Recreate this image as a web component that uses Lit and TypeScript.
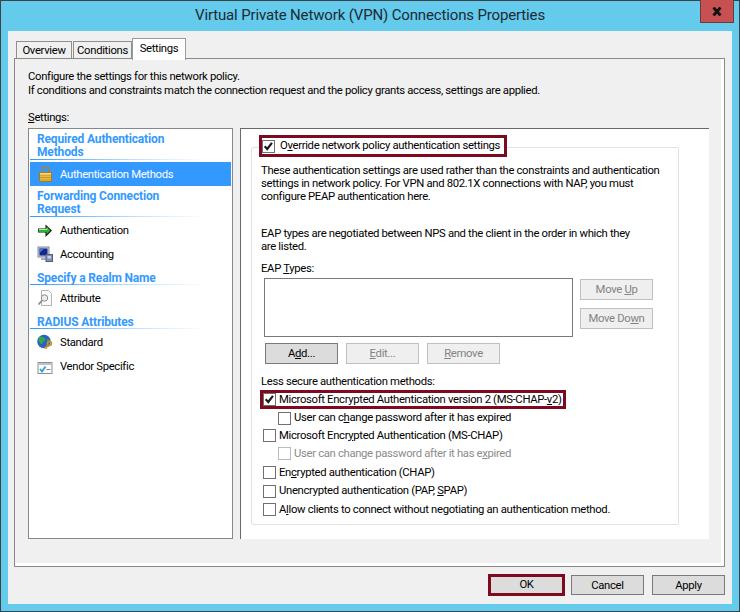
import { LitElement, html, css, svg } from "lit";
import { customElement } from "lit/decorators.js";

const check = svg`<path d="M2 6.2 L5 9.4 L10.6 2.2" fill="none" stroke="#1c1c1c" stroke-width="2.6"/>`;

const icons: Record<string, unknown> = {
  lock: svg`<path d="M5 7V3.600C5 1.800 6.500 .8 8.500 .8s3.500 1 3.500 2.800V7" fill="none" stroke="#8f8660" stroke-width="2"/><rect x="2.500" y="6.500" width="12" height="9" fill="#e8bb45" stroke="#a07d20"/><path d="M3 9h11M3 11.500h11M3 14h11" stroke="#c3962a"/><rect x="3" y="7" width="11" height="1.500" fill="#f7dd8a"/>`,
  arrow: svg`<path d="M1 6.500h7.500V2.500l6.500 6-6.500 6.500v-4.500H1z" fill="#111"/><path d="M1.500 7h8V4.500l4 4-4 4V10h-8z" fill="#26b526"/><path d="M2 7.500h8V6" fill="none" stroke="#a8efa8"/>`,
  monitor: svg`<rect x="1" y="1" width="11" height="10" fill="#c9c9d2" stroke="#8a8a96"/><rect x="2.500" y="2.500" width="8" height="7" fill="#14258c"/><path d="M2.500 2.500h5l-5 4.500z" fill="#3b78e0"/><rect x="4" y="12" width="6" height="2" fill="#a9acb8"/><rect x="9" y="8.500" width="6.500" height="7" fill="#7b92b8" stroke="#555f78"/><rect x="10.500" y="10" width="3.500" height="2.500" fill="#c4d4ec"/>`,
  attr: svg`<path d="M4.500 .5h7l3 3v12h-10z" fill="#fafafa" stroke="#b4b4b4"/><circle cx="7.500" cy="8" r="3.200" fill="#e6eef5" stroke="#8c8c8c"/><path d="M5 10.500L1.500 14.500" stroke="#8c8c8c" stroke-width="1.800"/>`,
  globe: svg`<circle cx="7" cy="7.500" r="6.800" fill="#2a62c8"/><path d="M3 2.500c2 0 3 1 4.500 1.500s1 2.500-.5 3-1 3-2.500 3-2.500-2.500-3-4c0-1.500.5-2.500 1.500-3.500zM10 5l3 1-.5 3-2.500 1z" fill="#37a84a"/><circle cx="12.500" cy="9.500" r="2" fill="none" stroke="#d58f1f" stroke-width="1.500"/><path d="M11 11l-3.500 3.500M8.500 13.500l1.500 1" stroke="#d58f1f" stroke-width="1.500" fill="none"/>`,
  vendor: svg`<rect x="1" y="4.500" width="14" height="11" fill="#fdfdfd" stroke="#8f8f8f"/><rect x="1.500" y="5" width="13" height="2" fill="#b9c2cf"/><path d="M3 11l2 2.500 3.500-5" fill="none" stroke="#2f9fd8" stroke-width="1.800"/><path d="M9.500 11.500h4" stroke="#8a8a8a"/>`,
};

@customElement("app-root")
export class AppRoot extends LitElement {
  static styles = css`
    :host { display: block; width: 740px; height: 612px; font: 11.3px/14px Roboto, "Liberation Sans", sans-serif; letter-spacing: -0.33px; color: #000; }
    * { box-sizing: border-box; }
    u { text-decoration-thickness: 1px; text-underline-offset: 1px; }
    .win { width: 740px; height: 612px; background: #65cbec; border: 1px solid #3c4248; display: flex; flex-direction: column; position: relative; }
    .titlebar { height: 30px; flex: none; text-align: center; font-size: 15px; line-height: 29px; letter-spacing: -0.15px; color: #1c2a33; }
    .close { position: absolute; right: 5px; top: -1px; width: 34px; height: 23px; background: #c75050; border: 1px solid #6e3a3a; border-top: none; display: flex; align-items: center; justify-content: center; }
    .client { flex: none; margin: 0 7px; width: 724px; height: 573px; background: #f0f0f0; padding-top: 7px; }
    .tabs { height: 20px; margin-left: 8px; display: flex; align-items: flex-end; position: relative; z-index: 1; }
    .tab { height: 17px; border: 1px solid #8f8f8f; border-bottom: none; background: #f0f0f0; line-height: 17px; text-align: center; }
    .tab.a { width: 56px; margin-right: 1px; }
    .tab.b { width: 59px; }
    .tab.on { width: 54px; height: 22px; margin-bottom: -2px; background: #fff; line-height: 19px; border-color: #9a9a9a; position: relative; }
    .panel { margin-left: 6px; width: 711px; height: 509px; border: 1px solid #898989; box-shadow: inset -3px -3px 0 #fff; padding: 11px 0 0 13px; }
    .intro { height: 28px; white-space: nowrap; }
    .label { margin-top: 13px; height: 14px; }
    .cols { margin-top: 3px; display: flex; gap: 7px; }
    .side { width: 205px; height: 411px; background: #fff; border: 1px solid #828790; padding-top: 0; }
    .hd { padding: 4px 0 0 8px; font-weight: 700; font-size: 12px; line-height: 13px; letter-spacing: -0.15px; color: #3399ff; }
    .hd.late { padding-top: 6px; margin-bottom: -1px; }
    .rule { height: 1px; margin: 0 26px 1px 1px; background: linear-gradient(90deg, #3399ff, #bfe0ff 60%, #fff); }
    .rule.first { margin-bottom: 2px; }
    .row { height: 24px; margin-left: 1px; margin-right: 1px; padding-left: 7px; display: flex; align-items: center; gap: 7px; }
    .row svg { flex: none; width: 16px; height: 16px; }
    .row span { padding-top: 2px; }
    .row.sel { background: #3399ff; color: #fff; }
    .pane { width: 469px; height: 411px; background: #fff; border-left: 1px solid #696969; border-top: 1px solid #696969; padding: 18px 0 0 10px; }
    .group { width: 428px; height: 378px; border: 1px solid #dfe3e6; border-radius: 2px; }
    .mark { border: 3px solid #7d0a1e; background: #fff; display: flex; align-items: center; gap: 5px; white-space: nowrap; }
    .mark.top { margin: -13px 0 0 7px; width: 248px; height: 22px; }
    .mark.ms { margin: 1px 0 0 8px; width: 306px; height: 19px; gap: 3px; }
    .cb { flex: none; width: 13px; height: 13px; border: 1px solid #707070; background: #fff; display: block; }
    .cb svg { display: block; width: 11px; height: 11px; margin: 0; }
    .p { margin: 0 0 0 9px; line-height: 13px; white-space: nowrap; }
    .p.one { margin-top: 7px; height: 39px; }
    .p.two { margin-top: 24px; height: 26px; }
    .eap { margin: 9px 0 0 9px; height: 14px; }
    .listrow { margin: 2px 0 0 12px; display: flex; gap: 7px; }
    .list { width: 309px; height: 59px; border: 1px solid #7a7a7a; background: #fff; }
    .stack { padding-top: 1px; display: flex; flex-direction: column; gap: 8px; }
    .btn { width: 73px; height: 21px; padding-top: 1px; border: 1px solid #7a7a7a; background: #dcdcdc; display: flex; align-items: center; justify-content: center; flex: none; white-space: pre; }
    .btn.off { border-color: #bfbfbf; background: #efefef; color: #838383; }
    .btns { margin: 6px 0 0 13px; display: flex; gap: 8px; }
    .less { margin: 11px 0 0 9px; height: 14px; }
    .chk { height: 18px; margin-left: 11px; display: flex; align-items: center; gap: 3px; white-space: nowrap; }
    .chk.sub { margin-left: 26px; }
    .chk.short { height: 17px; }
    .chk.tall { height: 19px; }
    .chk.off { color: #8b8b8b; }
    .chk.off .cb { border-color: #bcbcbc; }
    .foot { height: 31px; padding: 7px 7px 0 0; display: flex; justify-content: flex-end; align-items: flex-start; }
    .ok { width: 77px; height: 22px; border: 3px solid #7d0a1e; background: #dcdcdc; display: flex; align-items: center; justify-content: center; margin-right: 6px; }
    .foot .btn { height: 20px; margin-top: 1px; }
    .foot .btn.c { margin-right: 8px; }
  `;

  private box(on = false) {
    return html`<span class="cb">${on ? html`<svg viewBox="0 0 13 13">${check}</svg>` : ""}</span>`;
  }

  private icon(n: string) {
    return html`<svg viewBox="0 0 16 16">${icons[n]}</svg>`;
  }

  render() {
    return html`<div class="win">
      <div class="titlebar">Virtual Private Network (VPN) Connections Properties</div>
      <div class="close"><svg width="10" height="9" viewBox="0 0 10 9"><path d="M1.500 .5l7 8M8.500 .5l-7 8" stroke="#111" stroke-width="2.800"/></svg></div>
      <div class="client">
        <div class="tabs">
          <div class="tab a">Overview</div>
          <div class="tab b">Conditions</div>
          <div class="tab on">Settings</div>
        </div>
        <div class="panel">
          <div class="intro">Configure the settings for this network policy.<br />If conditions and constraints match the connection request and the policy grants access, settings are applied.</div>
          <div class="label"><u>S</u>ettings:</div>
          <div class="cols">
            <div class="side">
              <div class="hd">Required Authentication<br />Methods</div>
              <div class="rule first"></div>
              <div class="row sel">${this.icon("lock")}<span>Authentication Methods</span></div>
              <div class="hd">Forwarding Connection<br />Request</div>
              <div class="rule"></div>
              <div class="row">${this.icon("arrow")}<span>Authentication</span></div>
              <div class="row">${this.icon("monitor")}<span>Accounting</span></div>
              <div class="hd late">Specify a Realm Name</div>
              <div class="rule"></div>
              <div class="row">${this.icon("attr")}<span>Attribute</span></div>
              <div class="hd late">RADIUS Attributes</div>
              <div class="rule"></div>
              <div class="row">${this.icon("globe")}<span>Standard</span></div>
              <div class="row">${this.icon("vendor")}<span>Vendor Specific</span></div>
            </div>
            <div class="pane">
              <div class="group">
                <div class="mark top">${this.box(true)}<span>O<u>v</u>erride network policy authentication settings</span></div>
                <div class="p one">These authentication settings are used rather than the constraints and authentication<br />settings in network policy. For VPN and 802.1X connections with NAP, you must<br />configure PEAP authentication here.</div>
                <div class="p two">EAP types are negotiated between NPS and the client in the order in which they<br />are listed.</div>
                <div class="eap">EAP <u>T</u>ypes:</div>
                <div class="listrow">
                  <div class="list"></div>
                  <div class="stack">
                    <div class="btn off"><span>Move <u>U</u>p</span></div>
                    <div class="btn off"><span>Move Do<u>w</u>n</span></div>
                  </div>
                </div>
                <div class="btns">
                  <div class="btn"><span>A<u>d</u>d...</span></div>
                  <div class="btn off"><span><u>E</u>dit...</span></div>
                  <div class="btn off"><span><u>R</u>emove</span></div>
                </div>
                <div class="less">Less secure authentication methods:</div>
                <div class="mark ms">${this.box(true)}<span>Microsoft Encrypted Authentication version 2 (MS-CHAP-<u>v</u>2)</span></div>
                <div class="chk sub">${this.box()}<span>User can c<u>h</u>ange password after it has expired</span></div>
                <div class="chk short">${this.box()}<span>Microsoft Encr<u>y</u>pted Authentication (MS-CHAP)</span></div>
                <div class="chk sub off tall">${this.box()}<span>User can change password after it has e<u>x</u>pired</span></div>
                <div class="chk tall">${this.box()}<span>En<u>c</u>rypted authentication (CHAP)</span></div>
                <div class="chk">${this.box()}<span>Unencrypted authentication (PAP, <u>S</u>PAP)</span></div>
                <div class="chk tall">${this.box()}<span>A<u>l</u>low clients to connect without negotiating an authentication method.</span></div>
              </div>
            </div>
          </div>
        </div>
        <div class="foot">
          <div class="ok">OK</div>
          <div class="btn c">Cancel</div>
          <div class="btn">Apply</div>
        </div>
      </div>
    </div>`;
  }
}
